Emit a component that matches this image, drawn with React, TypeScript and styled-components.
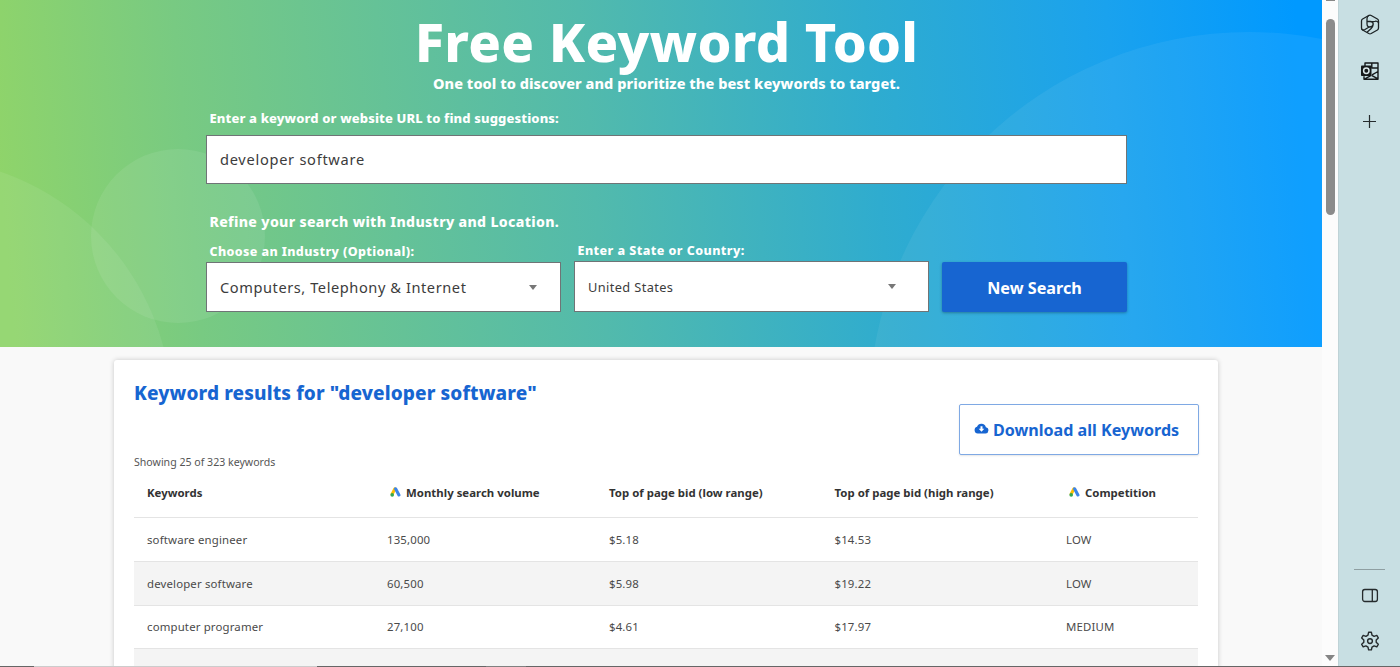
import React from "react";
import styled, { createGlobalStyle } from "styled-components";

const GlobalStyle = createGlobalStyle`
  * { box-sizing: border-box; }
  html, body { margin: 0; padding: 0; overflow: hidden; }
  body { font-family: "Noto Sans", "Open Sans", sans-serif; color: #444; background: #f9f9f9; }
  h1, h2, p { margin: 0; }
`;

const Window = styled.div`
  display: flex;
  position: relative;
  width: 1400px;
  height: 667px;
  overflow: hidden;
  background: #f9f9f9;
`;

const Page = styled.main`
  width: 1322px;
  height: 667px;
  overflow: hidden;
`;

const Hero = styled.header`
  position: relative;
  height: 347px;
  padding: 10px 195px 0 206px;
  color: #fff;
  overflow: hidden;
  background: linear-gradient(85deg, #8fd46a 1%, #78ca82 15%, #52baac 45%, #2faccf 66%, #1aa2ee 84%, #0099ff 98%);
`;

const Circles = styled.svg`
  position: absolute;
  inset: 0;
`;

const HeroContent = styled.div`
  position: relative;
`;

const Title = styled.h1`
  height: 63px;
  line-height: 62px;
  font-size: 54px;
  font-weight: 850;
  letter-spacing: 0.3px;
  text-align: center;
  white-space: nowrap;
`;

const Subtitle = styled.p`
  height: 20px;
  line-height: 20px;
  font-size: 14.5px;
  font-weight: 850;
  letter-spacing: 0.06px;
  text-align: center;
  white-space: nowrap;
`;

const Label = styled.label<{ $size: number; $spacing?: number; $gap: number }>`
  display: block;
  height: 20px;
  line-height: 20px;
  padding-left: 3.5px;
  margin-bottom: ${(p) => p.$gap}px;
  font-size: ${(p) => p.$size}px;
  font-weight: 800;
  letter-spacing: ${(p) => p.$spacing ?? 0}px;
  white-space: nowrap;
`;

const SearchBlock = styled.div`
  padding-top: 15px;
`;

const Field = styled.div<{ $height: number; $size: number; $spacing: number; $lift?: number }>`
  display: flex;
  align-items: center;
  justify-content: space-between;
  height: ${(p) => p.$height}px;
  padding: 0 23px ${(p) => p.$lift ?? 0}px 13px;
  border: 1px solid #6f7476;
  background: #fff;
  color: #3c3c3c;
  font-size: ${(p) => p.$size}px;
  font-weight: 400;
  letter-spacing: ${(p) => p.$spacing}px;
  white-space: nowrap;
`;

const Caret = styled.i<{ $right?: number }>`
  margin-right: ${(p) => p.$right ?? 0}px;
  border: 4.5px solid transparent;
  border-top: 5px solid #777;
  border-bottom: 0;
`;

const Filters = styled.div`
  display: grid;
  grid-template-columns: 355px 355px 185px;
  column-gap: 13px;
  align-items: end;
`;

const Refine = styled.div`
  padding-top: 28px;
`;

const SearchButton = styled.button`
  height: 50px;
  padding: 2px 0 0;
  border: 0;
  border-radius: 2px;
  background: #1765d1;
  color: #fff;
  font: 750 16.2px "Noto Sans", sans-serif;
  box-shadow: 0 1px 3px rgba(0, 0, 0, 0.3);
`;

const Card = styled.section`
  width: 1104px;
  height: 340px;
  margin: 13px 0 0 114px;
  padding: 20px 20px 0;
  border-radius: 3px 3px 0 0;
  background: #fff;
  box-shadow: 0 0 5px rgba(0, 0, 0, 0.2);
`;

const CardHead = styled.div`
  display: flex;
  justify-content: space-between;
  height: 76px;
`;

const ResultsTitle = styled.h2`
  height: 26px;
  line-height: 26px;
  font-size: 19px;
  font-weight: 800;
  letter-spacing: 0.12px;
  color: #1765d1;
  white-space: nowrap;
`;

const DownloadButton = styled.button`
  display: flex;
  align-items: center;
  gap: 4px;
  width: 240px;
  height: 51px;
  margin: 24px -1px 0 0;
  padding: 0 0 0 14px;
  border: 1px solid #7fa9e4;
  border-radius: 2px;
  background: #fff;
  color: #1765d1;
  font: 750 16.1px "Noto Sans", sans-serif;
  white-space: nowrap;
  box-shadow: 0 1px 2px rgba(0, 0, 0, 0.1);
`;

const Count = styled.p`
  height: 13px;
  line-height: 13px;
  font-size: 10.6px;
  color: #555;
`;

const Row = styled.div<{ $head?: boolean; $shaded?: boolean }>`
  display: grid;
  grid-template-columns: 240px 222px 225.5px 231.5px 1fr;
  align-items: center;
  height: ${(p) => (p.$head ? 49 : 43.8)}px;
  padding-left: 13px;
  border-bottom: 1px solid #e4e4e4;
  background: ${(p) => (p.$shaded ? "#f4f4f4" : "#fff")};
  color: ${(p) => (p.$head ? "#333" : "#4a4a4a")};
  font-size: 11.4px;
  letter-spacing: ${(p) => (p.$head ? 0.02 : 0.16)}px;
  font-weight: ${(p) => (p.$head ? 700 : 400)};
  white-space: nowrap;
`;

const HeadCell = styled.div`
  display: flex;
  align-items: center;
  height: 48px;
  padding-bottom: 2px;
`;

const AdsMark = styled.svg`
  margin: 0 5px 1px 3px;
`;

const Scrollbar = styled.div`
  display: flex;
  flex-direction: column;
  align-items: center;
  justify-content: space-between;
  width: 16px;
  height: 667px;
  padding-bottom: 6px;
  background: #fcfcfc;
`;

const ThumbArea = styled.div`
  display: flex;
  flex-direction: column;
  gap: 18px;
  align-items: center;
`;

const ArrowEdge = styled.div`
  width: 9px;
  height: 1px;
  background: #888;
`;

const Thumb = styled.div`
  width: 9px;
  height: 196px;
  border-radius: 5px;
  background: #8b8b8b;
`;

const ScrollDown = styled.div`
  border: 5px solid transparent;
  border-top: 6px solid #858585;
  border-bottom: 0;
`;

const Sidebar = styled.aside`
  display: flex;
  flex-direction: column;
  justify-content: space-between;
  align-items: center;
  width: 62px;
  padding: 14px 0 16px;
  border-left: 1px solid #bfd3d7;
  background: #c8dfe3;
`;

const IconGroup = styled.div<{ $gap: number }>`
  display: flex;
  flex-direction: column;
  align-items: center;
  gap: ${(p) => p.$gap}px;
  svg { display: block; }
`;

const PlusIcon = styled.svg`
  margin: 7px 0 0 0;
`;

const Divider = styled.div`
  width: 31px;
  height: 1px;
  background: #8f9fa2;
`;

const BottomEdge = styled.div`
  position: absolute;
  left: 0;
  right: 0;
  bottom: 0;
  height: 1px;
  background: linear-gradient(90deg, #666 34px, #ccc 34px 317px, #666 317px 486px, #808080 486px 526px, #666 526px);
`;

function AdsIcon() {
  return (
    <AdsMark width="11" height="10" viewBox="0 0 11 10">
      <path d="M4.9 1.8 2.1 7.2" stroke="#fbbc04" strokeWidth="3" strokeLinecap="round" />
      <path d="M5.6 1.8 8.9 8" stroke="#3c85e8" strokeWidth="3.1" strokeLinecap="round" />
      <circle cx="2.2" cy="7.9" r="1.8" fill="#34a853" />
    </AdsMark>
  );
}

function CloudIcon() {
  return (
    <svg width="15" height="14" viewBox="0 0 15 14">
      <path fill="#1765d1" d="M3.7 10.5A3.5 3.5 0 0 1 3 3.7 4.7 4.7 0 0 1 11.9 4.2 3.2 3.2 0 0 1 11.6 10.5Z" />
      <path fill="#fff" d="M6.5 3.3h2v2.5h1.8L7.5 8.7 4.7 5.8h1.8z" />
    </svg>
  );
}

const rows = [
  ["software engineer", "135,000", "$5.18", "$14.53", "LOW"],
  ["developer software", "60,500", "$5.98", "$19.22", "LOW"],
  ["computer programer", "27,100", "$4.61", "$17.97", "MEDIUM"],
  ["", "", "", "", ""],
];

export default function App() {
  return (
    <Window>
      <GlobalStyle />
      <Page>
        <Hero>
          <Circles width="1322" height="347" viewBox="0 0 1322 347" fill="#fff">
            <circle cx="-82" cy="412" r="254" fillOpacity="0.07" />
            <circle cx="178" cy="236" r="87" fillOpacity="0.08" />
            <circle cx="1249" cy="412" r="380" fillOpacity="0.06" />
          </Circles>
          <HeroContent>
            <Title>Free Keyword Tool</Title>
            <Subtitle>One tool to discover and prioritize the best keywords to target.</Subtitle>
            <SearchBlock>
              <Label $size={13} $gap={7} $spacing={0.13}>Enter a keyword or website URL to find suggestions:</Label>
              <Field $height={49} $size={14.6} $spacing={0.72} $lift={2}>developer software</Field>
            </SearchBlock>
            <Refine>
              <Label $size={14.1} $gap={9} $spacing={0.33}>Refine your search with Industry and Location.</Label>
              <Filters>
                <div>
                  <Label $size={12.5} $gap={0} $spacing={0.38}>Choose an Industry (Optional):</Label>
                  <Field $height={50} $size={14.6} $spacing={0.57}>
                    Computers, Telephony &amp; Internet
                    <Caret />
                  </Field>
                </div>
                <div>
                  <Label $size={12.5} $gap={0} $spacing={0.44}>Enter a State or Country:</Label>
                  <Field $height={51} $size={12.8} $spacing={0.38}>
                    United States
                    <Caret $right={9} />
                  </Field>
                </div>
                <SearchButton>New Search</SearchButton>
              </Filters>
            </Refine>
          </HeroContent>
        </Hero>
        <Card>
          <CardHead>
            <ResultsTitle>Keyword results for "developer software"</ResultsTitle>
            <DownloadButton>
              <CloudIcon />
              Download all Keywords
            </DownloadButton>
          </CardHead>
          <Count>Showing 25 of 323 keywords</Count>
          <Row $head>
            <HeadCell>Keywords</HeadCell>
            <HeadCell><AdsIcon />Monthly search volume</HeadCell>
            <HeadCell>Top of page bid (low range)</HeadCell>
            <HeadCell>Top of page bid (high range)</HeadCell>
            <HeadCell><AdsIcon />Competition</HeadCell>
          </Row>
          {rows.map((cells, i) => (
            <Row key={i} $shaded={i % 2 === 1}>
              {cells.map((cell, j) => <span key={j}>{cell}</span>)}
            </Row>
          ))}
        </Card>
      </Page>
      <Scrollbar>
        <ThumbArea>
          <ArrowEdge />
          <Thumb />
        </ThumbArea>
        <ScrollDown />
      </Scrollbar>
      <Sidebar>
        <IconGroup $gap={26}>
          <svg width="20" height="21" viewBox="0 0 20 21" fill="none" stroke="#1d2426" strokeWidth="1.3" strokeLinejoin="round" strokeLinecap="round">
            <path d="M8.8 1.5 2.6 5Q1.5 5.7 1.5 7v7q0 1.3 1.1 2l6.2 3.5q1.2.6 2.4 0l6.2-3.5q1.1-.7 1.1-2V7q0-1.3-1.1-2l-6.2-3.5q-1.2-.6-2.4 0Z" />
            <path d="M8.800 1.500Q7 2.500 7 4.700v5q0 3.300 3 3.300 3.200-.2 3.200-2.900 0-2.500-2.900-2.600H7M18.500 8.500q-1.500-1.700-3.500-1.200l-3 .4M13.200 10.500q-.3 2.500-2 4L7.300 18M2 15.300q1 1.200 3 .2l4.500-2.700" />
          </svg>
          <svg width="20" height="20" viewBox="0 0 20 20" fill="none" stroke="#15191a" strokeWidth="1.4" strokeLinejoin="round">
            <path d="M5 5V2h13v16.300H4v-3M11.800 2v5H18M18 10.500l-6 3.300M4.500 18l6-3.200M11.500 14.300l6.500 3.500" />
            <rect x="1" y="4.500" width="10.500" height="10.500" rx=".8" fill="#15191a" stroke="none" />
            <circle cx="6.300" cy="9.700" r="2.700" stroke="#dbe8ea" strokeWidth="1.500" />
          </svg>
          <PlusIcon width="15" height="15" viewBox="0 0 15 15" stroke="#252b2d" strokeWidth="1.200">
            <path d="M7.500 1v13M1 7.500h13" />
          </PlusIcon>
        </IconGroup>
        <IconGroup $gap={0}>
          <Divider />
          <svg width="18" height="50" viewBox="0 0 18 50" fill="none" stroke="#252b2d" strokeWidth="1.300">
            <rect x="1.600" y="19.500" width="14.800" height="12" rx="2.200" />
            <path d="M11.300 19.500v12" />
          </svg>
          <svg width="20" height="31" viewBox="0 0 20 31" fill="none" stroke="#252b2d" strokeWidth="1.400" strokeLinejoin="round">
            <path d="M8 15.100 8.600 12.300h2.800l.6 2.800 2.100 1.200 2.700-.9 1.500 2.500-2.100 2v2.400l2.100 2-1.500 2.500-2.700-.9-2.100 1.200-.6 2.800H8.600L8 27.100l-2.100-1.200-2.700.9-1.500-2.500 2.100-2v-2.400l-2.100-2 1.500-2.500 2.700.9Z" />
            <circle cx="10" cy="21.100" r="2.400" />
          </svg>
        </IconGroup>
      </Sidebar>
      <BottomEdge />
    </Window>
  );
}
